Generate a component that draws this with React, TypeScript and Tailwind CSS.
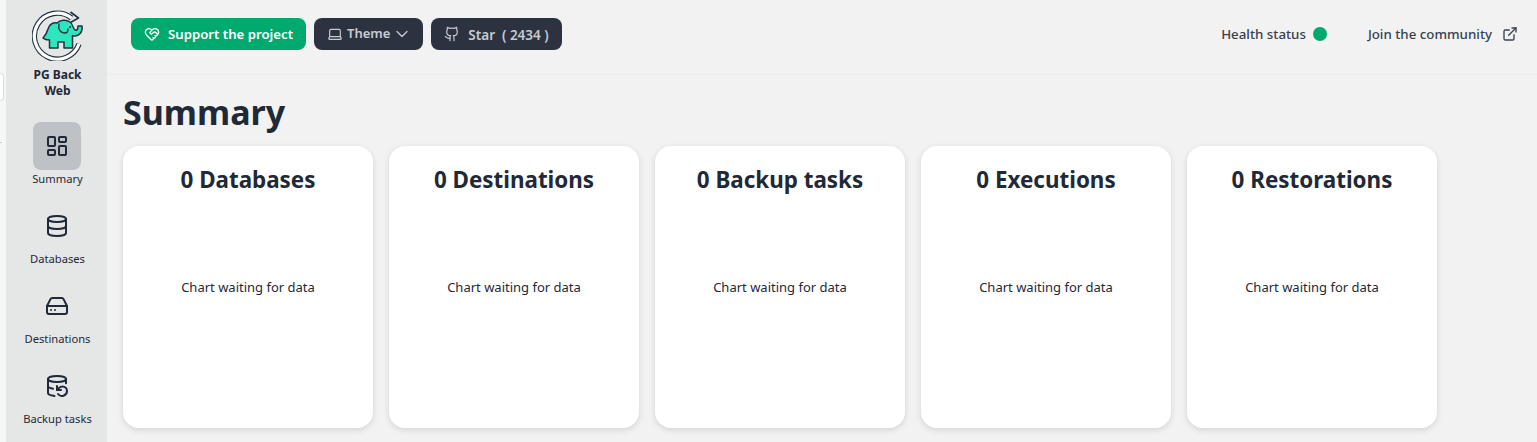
import { ChevronDown, Database, DatabaseBackup, ExternalLink, Github, HardDrive, HeartHandshake, Laptop, LayoutDashboard } from "lucide-react";

const NAV = [
  { label: "Summary", icon: LayoutDashboard, active: true },
  { label: "Databases", icon: Database },
  { label: "Destinations", icon: HardDrive },
  { label: "Backup tasks", icon: DatabaseBackup },
];

const CARDS = ["0 Databases", "0 Destinations", "0 Backup tasks", "0 Executions", "0 Restorations"];

const RING = "M39.5 9A23 23 0 1 0 47 35";

function Logo() {
  return (
    <svg viewBox="0 0 52 52" className="h-[52px] w-[52px]">
      {/* refresh ring: dark outline under white */}
      <g fill="none">
        <path d={RING} stroke="#1f3340" strokeWidth="5.4" />
        <path d={RING} stroke="#ffffff" strokeWidth="3.2" />
      </g>
      <path d="M38.5 3l8 6-8 4.5" fill="none" stroke="#1f3340" strokeWidth="1.6" strokeLinejoin="round" />
      <path
        d="M11 29C13 27 15 24 16 20C17 15 22 13 25 14C28 11 34 10 38 13C41 15 41 20 43 21C45 22 46 20 46 17L50 17C51 23 47 27 43 27C42 27 41 27 40.5 26.5L40.5 39L32 39L32 33L26 33L26 39L17.5 39L17.5 31C15 31 13 31 11 29Z"
        fill="#2ee6bd"
        stroke="#1f3340"
        strokeWidth="1.5"
        strokeLinejoin="round"
      />
      <path d="M27 15c-1 5 1 9 6 9c2 0 3-2 3-4" fill="none" stroke="#1f3340" strokeWidth="1.4" strokeLinecap="round" />
      <circle cx="38" cy="18" r="1" fill="#1f3340" />
    </svg>
  );
}

function Sidebar() {
  return (
    <aside className="flex h-[442px] w-[101px] shrink-0 flex-col items-center overflow-hidden bg-[#e5e6e6] pt-[9px] pl-[2px]">
      <Logo />
      <div className="mt-[6px] text-center text-xs leading-4 font-bold">
        PG Back
        <br />
        Web
      </div>
      <nav className="mt-[23px] flex flex-col items-center gap-[8px]">
        {NAV.map((n) => (
          <div key={n.label} className="flex h-[72px] flex-col items-center">
            <div className={`flex h-12 w-12 items-center justify-center rounded-lg ${n.active ? "bg-[#bec1c5]" : ""}`}>
              <n.icon size={24} strokeWidth={2} />
            </div>
            <span className="mt-[1px] text-[11.2px] leading-4 whitespace-nowrap">{n.label}</span>
          </div>
        ))}
      </nav>
    </aside>
  );
}

function Topbar() {
  return (
    <header className="flex h-[75px] items-center justify-between border-b border-[#ebebeb] pr-[19px] pb-[6px] pl-6">
      <div className="flex items-center gap-2">
        <button className="flex h-8 w-[175px] items-center justify-center gap-2 rounded-lg bg-[#00a96e] pt-[2px] text-[13.2px] font-semibold text-white">
          <HeartHandshake size={16} className="-mt-[2px]" />
          Support the project
        </button>
        <button className="flex h-8 w-[109px] items-center gap-1 rounded-lg bg-[#2c3240] pt-[2px] pl-[13px] text-[13px] font-semibold text-[#c7cbd1]">
          <Laptop size={16} strokeWidth={1.75} className="-mt-[2px]" />
          <span className="-mt-0.5">Theme</span>
          <ChevronDown size={20} strokeWidth={1.5} className="-mt-[2px] -ml-[2px]" />
        </button>
        <button className="flex h-8 w-[131px] items-center justify-center gap-2 rounded-lg bg-[#2c3240] pt-[2px] text-[13.5px] font-semibold text-[#c7cbd1]">
          <Github size={16} strokeWidth={1.75} className="-mt-[2px]" />
          Star&nbsp;&nbsp;( 2434 )
        </button>
      </div>
      <div className="flex items-center gap-[41px] pt-[2px] text-[13.3px] font-medium text-[#374151]">
        <div className="flex items-center gap-[7px]">
          Health status
          <span className="-mt-[2px] h-3.5 w-3.5 rounded-full bg-[#00a96e]" />
        </div>
        <div className="flex items-center gap-[10px]">
          Join the community
          <ExternalLink size={16} className="-mt-[2px]" />
        </div>
      </div>
    </header>
  );
}

function SummaryCard({ title }: { title: string }) {
  return (
    <div className="flex h-[282px] w-[250px] shrink-0 flex-col rounded-2xl bg-white pt-4 shadow-[0_2px_6px_rgba(0,0,0,0.13)]">
      <h2 className="text-center text-[22.4px] leading-9 font-bold">{title}</h2>
      <div className="flex flex-1 items-center justify-center pb-[51px] text-[13px]">Chart waiting for data</div>
    </div>
  );
}

export default function App() {
  return (
    <div className="flex h-[442px] w-[1537px] overflow-hidden bg-[#f2f2f2] font-['Noto_Sans',sans-serif] text-[#1f2937]">
      <div className="relative w-[6px] shrink-0 bg-[#f6f6f6]">
        <div className="absolute top-[74px] left-0 h-[26px] w-[3px] rounded-r-sm bg-white shadow-[0_0_2px_rgba(0,0,0,0.35)]" />
        <div className="absolute top-[142px] left-0 h-px w-[2px] bg-[#cccccc]" />
      </div>
      <Sidebar />
      <main className="min-w-0 flex-1">
        <Topbar />
        <div className="px-4">
          <h1 className="mt-[14px] h-[47px] text-[34px] leading-[47px] font-bold">Summary</h1>
          <div className="mt-[10px] flex gap-4">
            {CARDS.map((c) => (
              <SummaryCard key={c} title={c} />
            ))}
          </div>
        </div>
      </main>
    </div>
  );
}
